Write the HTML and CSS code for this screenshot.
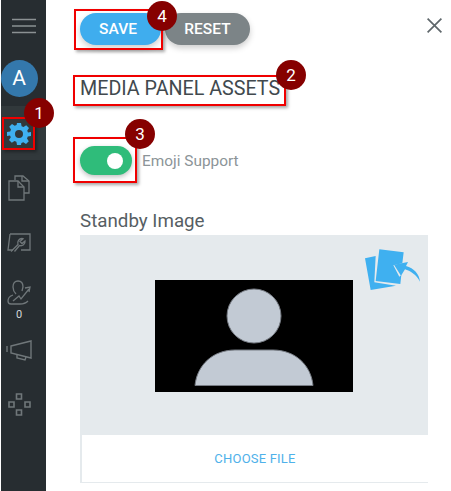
FILE: index.html
```html
<!DOCTYPE html>
<html lang="en">
  <head>
    <meta charset="UTF-8" />
    <title>Media Panel Assets</title>
    <link rel="stylesheet" href="styles.css">
  </head>
  <body>
    <div class="app">
      <nav class="sidebar">
        <div class="nav-burger">
          <svg width="24" height="16" viewBox="0 0 24 16"><path d="M0 1.5H24M0 8H24M0 14.5H24" stroke="#8b9193" stroke-width="1.3" fill="none"/></svg>
        </div>
        <div class="avatar">A</div>
        <div class="nav-item active">
          <svg width="24" height="24" viewBox="0 0 24 24"><path fill="#3fb0f0" fill-rule="evenodd" d="M10 1h4l.6 3.2 1.9.8 2.7-1.8 2.8 2.8-1.8 2.7.8 1.9L24 10v4l-3.2.6-.8 1.9 1.8 2.7-2.8 2.8-2.7-1.8-1.9.8L14 23h-4l-.6-3.2-1.9-.8-2.7 1.8-2.8-2.8 1.8-2.7-.8-1.9L0 14v-4l3.2-.6.8-1.9-1.8-2.7 2.8-2.8 2.7 1.8 1.9-.8zM12 8a4 4 0 1 0 0 8 4 4 0 0 0 0-8z"/></svg>
        </div>
        <div class="nav-item docs">
          <svg width="22" height="26" viewBox="0 0 22 26" fill="none" stroke="#70777a" stroke-width="1.3"><path d="M7 5V1h8l6 5v12h-5"/><path d="M14 1v5h7"/><path d="M1 6h9l6 6v13H1z"/><path d="M10 6v6h6"/></svg>
        </div>
        <div class="nav-item tools">
          <svg width="24" height="19" viewBox="0 0 24 19" fill="none" stroke="#70777a" stroke-width="1.3"><path d="M3 1h20v16H14M6 17H1L3 1"/><path d="M4 18.5l7-7c-1-3 1-6 4-6l1 .3-3 2.7 2 2 3-2.5c.4 3-2.5 5.5-5.5 4.5l-5 6"/></svg>
        </div>
        <div class="nav-item stats">
          <svg width="25" height="25" viewBox="0 0 25 25" fill="none" stroke="#70777a" stroke-width="1.3"><path d="M9 14c-1-1-3-3-3-7s2-6 5-6 5 2 5 6l-1 4"/><path d="M6 15c-3 1-5 3-5 6 0 2 1 3 3 3h9c3 0 6-1 8-3"/><path d="M6 21l6-5 2 3 8-10M18 8l5-1-1 5"/></svg>
          <span class="stats-count">0</span>
        </div>
        <div class="nav-item horn">
          <svg width="26" height="22" viewBox="0 0 26 22" fill="none" stroke="#70777a" stroke-width="1.4"><path d="M1 6v6"/><path d="M5 6l20-5v17L5 13z"/><path d="M11 15v3l8 2 1-3"/></svg>
        </div>
        <div class="nav-item nodes">
          <svg width="23" height="23" viewBox="0 0 23 23" fill="none" stroke="#70777a" stroke-width="1.6"><path d="M8.5 1h5v5h-5zM8.5 17h5v5h-5zM1 9h5v5H1zM17 9h5v5h-5z"/></svg>
        </div>
      </nav>

      <main class="panel">
        <div class="actions">
          <button class="btn btn-save">SAVE</button>
          <button class="btn btn-reset">RESET</button>
          <svg class="close" width="15" height="15" viewBox="0 0 15 15"><path d="M.6.6L14.4 14.4M14.4.6L.6 14.4" stroke="#5f676b" stroke-width="1.7" fill="none"/></svg>
        </div>
        <h2 class="title">MEDIA PANEL ASSETS</h2>
        <div class="toggle-row">
          <div class="toggle"><span class="knob"></span></div>
          <span class="toggle-label">Emoji Support</span>
        </div>
        <h3 class="field-label">Standby Image</h3>
        <div class="dropzone">
          <div class="preview-area">
            <div class="preview">
              <svg width="198" height="112" viewBox="0 0 198 112"><rect width="198" height="112" fill="#000"/><circle cx="99" cy="36" r="27" fill="#c2cad4" stroke="#777c84"/><path d="M40 105.5C42 85 58 70 80 70H118C140 70 156 85 158 105.5z" fill="#c2cad4" stroke="#777c84"/></svg>
            </div>
            <svg class="upload-icon" width="58" height="44" viewBox="72 54 174 132"><path fill="#3fb0f0" d="M75 85l32-7-4 79 65 10-76 13z"/><path fill="#3fb0f0" d="M118 58l73 9-4 33-27 6 18 34 6-5-3 27-74-9z"/><path fill="#3fb0f0" d="M162 104l42-8-6 12c24 7 40 24 42 47-10-20-30-33-45-37l-12 19z"/></svg>
          </div>
          <button class="choose-file">CHOOSE FILE</button>
        </div>
      </main>
    </div>

    <div class="mark mark-gear"></div>
    <div class="mark mark-save"></div>
    <div class="mark mark-title"></div>
    <div class="mark mark-toggle"></div>
    <div class="badge badge-1">1</div>
    <div class="badge badge-2">2</div>
    <div class="badge badge-3">3</div>
    <div class="badge badge-4">4</div>
  </body>
</html>
```

FILE: styles.css
```css
html,
body {
  margin: 0;
  padding: 0;
  height: 491px;
  overflow: hidden;
  background-color: #fff;
}
body {
  font-family: Roboto, "Liberation Sans", sans-serif;
  position: relative;
}
.app {
  display: flex;
  height: 491px;
}

/* left rail */
.sidebar {
  width: 45px;
  margin-left: 1px;
  background-color: #272d31;
  display: flex;
  flex-direction: column;
  align-items: center;
  flex-shrink: 0;
}
.nav-burger {
  height: 52px;
  padding-top: 18px;
  box-sizing: border-box;
}
.nav-burger svg {
  display: block;
}
.avatar {
  width: 37px;
  height: 37px;
  margin: 8px 0 0 -9px;
  border-radius: 50%;
  background-color: #3478ac;
  color: #fff;
  font-size: 21px;
  line-height: 37px;
  text-align: center;
}
.nav-item {
  width: 100%;
  display: flex;
  flex-direction: column;
  align-items: center;
}
.nav-item svg {
  display: block;
  margin-left: -9px;
}
.nav-item.active {
  height: 54px;
  margin-top: 9px;
  padding-top: 16px;
  box-sizing: border-box;
  background-color: #31383b;
}
.docs {
  margin-top: 15px;
}
.tools {
  margin-top: 32px;
}
.stats {
  margin-top: 28px;
}
.stats-count {
  margin: 3px 0 0 -9px;
  font-size: 11px;
  line-height: 13px;
  color: #d5d8d9;
}
.horn {
  margin-top: 19px;
}
.nodes {
  margin-top: 31px;
}

/* content */
.panel {
  flex: 1;
  padding: 13px 9px 0 34px;
  min-width: 0;
}
.actions {
  display: flex;
  align-items: flex-start;
  gap: 4px;
}
.btn {
  height: 32px;
  border: none;
  border-radius: 16px;
  color: #fff;
  font-family: Roboto, "Liberation Sans", sans-serif;
  font-size: 15.5px;
  font-weight: 500;
  padding: 0;
  box-shadow: 0 3px 6px rgba(0, 0, 0, 0.2);
}
.btn-save {
  width: 81px;
  padding-right: 5px;
  background-color: #3fadee;
}
.btn-reset {
  width: 85px;
  background-color: #7c8487;
}
.close {
  margin: 5px 0 0 auto;
}
.title {
  margin: 32px 0 0;
  font-size: 19.7px;
  font-weight: 400;
  line-height: 24px;
  color: #41494e;
}
.toggle-row {
  display: flex;
  align-items: center;
  gap: 10px;
  margin-top: 45px;
}
.toggle {
  width: 52px;
  height: 29px;
  border-radius: 15px;
  background-color: #2fbc7a;
  box-shadow: 0 2px 5px rgba(0, 0, 0, 0.25);
  display: flex;
  align-items: center;
  justify-content: flex-end;
  padding-right: 9px;
  box-sizing: border-box;
}
.knob {
  width: 16px;
  height: 16px;
  border-radius: 50%;
  background-color: #fff;
}
.toggle-label {
  font-size: 15.4px;
  color: #8c9498;
}
.field-label {
  margin: 34px 0 0;
  font-size: 18.75px;
  font-weight: 400;
  line-height: 24px;
  color: #565e63;
}
.dropzone {
  width: 348px;
  height: 248px;
  margin-top: 2px;
  display: flex;
  flex-direction: column;
  background-color: #e5eaed;
  box-sizing: border-box;
  padding: 0 0 1px 2px;
}
.preview-area {
  height: 200px;
  position: relative;
  display: flex;
  justify-content: center;
  padding-top: 45px;
  box-sizing: border-box;
  margin-left: -2px;
}
.preview svg {
  display: block;
}
.upload-icon {
  position: absolute;
  top: 13px;
  right: 6px;
}
.choose-file {
  flex: 1;
  border: none;
  background-color: #fff;
  color: #4fb1ea;
  font-family: Roboto, "Liberation Sans", sans-serif;
  font-size: 13px;
  font-weight: 400;
  letter-spacing: 0.2px;
  padding: 0;
}

/* tutorial annotations over the page */
.mark {
  position: absolute;
  border: 2px solid #f00000;
  box-sizing: border-box;
  box-shadow: 2px 2px 3px rgba(0, 0, 0, 0.35);
}
.mark-gear {
  left: 2px;
  top: 117px;
  width: 33px;
  height: 33px;
}
.mark-save {
  left: 74px;
  top: 9px;
  width: 89px;
  height: 41px;
}
.mark-title {
  left: 73px;
  top: 75px;
  width: 213px;
  height: 31px;
}
.mark-toggle {
  left: 73px;
  top: 137px;
  width: 64px;
  height: 46px;
}
.badge {
  position: absolute;
  width: 30px;
  height: 30px;
  border-radius: 50%;
  background-color: #860000;
  color: #fff;
  font-size: 17px;
  line-height: 30px;
  text-align: center;
}
.badge-1 {
  left: 24px;
  top: 98px;
}
.badge-2 {
  left: 276px;
  top: 60px;
}
.badge-3 {
  left: 125px;
  top: 119px;
}
.badge-4 {
  left: 147px;
  top: 1px;
}
```
